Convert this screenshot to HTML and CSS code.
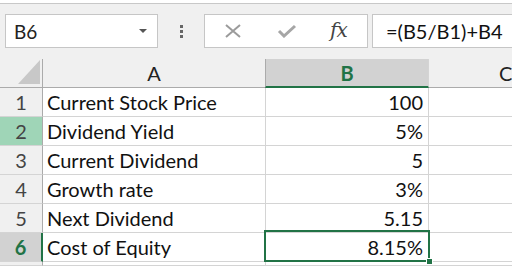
FILE: index.html
```html
<!DOCTYPE html>
<html lang="en">
<head>
    <meta charset="UTF-8">
    <meta name="viewport" content="width=device-width, initial-scale=1.0">
    <title>Cost of Equity</title>
    <link rel="stylesheet" href="styles.css">
</head>
<body>
<div class="topstrip"></div>
<div class="toolbar">
  <div class="namebox">
    <span>B6</span>
    <span class="arrow"></span>
  </div>
  <div class="dots"><i></i><i></i><i></i></div>
  <div class="fxbox">
    <svg class="icon" width="18" height="14" viewBox="0 0 18 14">
      <path d="M2 1 L16 13 M16 1 L2 13" stroke="#9b9b9b" stroke-width="2" fill="none"/>
    </svg>
    <svg class="icon" width="20" height="14" viewBox="0 0 20 14">
      <path d="M2 7 L7 12 L18 2" stroke="#a6a6a6" stroke-width="3" fill="none"/>
    </svg>
    <span class="fx">fx</span>
  </div>
  <div class="formula">=(B5/B1)+B4</div>
</div>

<div class="sheet">
  <div class="corner"><span class="tri"></span></div>
  <div class="colhead">A</div>
  <div class="colhead active">B</div>
  <div class="colhead last">C</div>

  <div class="rowhead">1</div>
  <div class="cell">Current Stock Price</div>
  <div class="cell num">100</div>
  <div class="cell"></div>

  <div class="rowhead green">2</div>
  <div class="cell">Dividend Yield</div>
  <div class="cell num">5%</div>
  <div class="cell"></div>

  <div class="rowhead">3</div>
  <div class="cell">Current Dividend</div>
  <div class="cell num">5</div>
  <div class="cell"></div>

  <div class="rowhead">4</div>
  <div class="cell">Growth rate</div>
  <div class="cell num">3%</div>
  <div class="cell"></div>

  <div class="rowhead">5</div>
  <div class="cell">Next Dividend</div>
  <div class="cell num">5.15</div>
  <div class="cell"></div>

  <div class="rowhead active">6</div>
  <div class="cell">Cost of Equity</div>
  <div class="cell num selected">8.15%</div>
  <div class="cell"></div>

  <div class="rowhead"></div>
  <div class="cell"></div>
  <div class="cell"></div>
  <div class="cell"></div>
</div>
</body>
</html>
```

FILE: styles.css
```css
body{
  margin:0;
  height:266px;
  background:#f0f0f0;
  font-family:Lato, "Open Sans", sans-serif;
  color:#111;
  overflow:hidden;
}
.topstrip{
  height:3px;
  background:#fff;
  border-bottom:1px solid #c8c8c8;
}
.toolbar{
  display:flex;
  align-items:center;
  height:34px;
  padding:10px 0 0 5px;
  white-space:nowrap;
}
.namebox{
  box-sizing:border-box;
  width:153px;
  height:34px;
  background:#fff;
  border:1px solid #c6c6c6;
  display:flex;
  align-items:center;
  justify-content:space-between;
  padding:0 10px 0 8px;
  font-size:19px;
  color:#222;
}
.arrow{
  width:0;
  height:0;
  border-left:4px solid transparent;
  border-right:4px solid transparent;
  border-top:4px solid #555;
}
.dots{
  display:flex;
  flex-direction:column;
  gap:2px;
  margin:0 21px 0 22px;
}
.dots i{
  display:block;
  width:3px;
  height:3px;
  background:#666;
}
.fxbox{
  box-sizing:border-box;
  width:164px;
  height:34px;
  background:#fff;
  border:1px solid #c6c6c6;
  display:flex;
  align-items:center;
  padding:0 0 0 19px;
}
.fxbox .icon:nth-child(2){
  margin-left:35px;
}
.fx{
  margin-left:33px;
  margin-top:-2px;
  font-family:"DejaVu Serif", serif;
  font-style:italic;
  font-size:20px;
  letter-spacing:-1px;
  color:#444;
}
.formula{
  box-sizing:border-box;
  flex:1;
  height:34px;
  margin-left:4px;
  background:#fff;
  border:1px solid #c6c6c6;
  border-right:none;
  padding:0 0 0 13px;
  display:flex;
  align-items:center;
  font-size:20px;
  color:#111;
}
.sheet{
  margin-top:11px;
  display:grid;
  grid-template-columns:43px 223px 163px 1fr;
  grid-template-rows:repeat(7,29px) 4px;
  font-size:20px;
}
.sheet > div{
  box-sizing:border-box;
  border-right:1px solid #d4d4d4;
  border-bottom:1px solid #d4d4d4;
  display:flex;
  align-items:center;
}
.corner{
  position:relative;
  border-right-color:#ababab !important;
  border-bottom-color:#ababab !important;
}
.tri{
  position:absolute;
  left:18px;
  top:1px;
  width:0;
  height:0;
  border-left:22px solid transparent;
  border-bottom:24px solid #c8c8c8;
}
.colhead{
  justify-content:center;
  color:#222;
  border-bottom-color:#ababab !important;
}
.colhead.active{
  background:#d2d2d2;
  color:#217346;
  font-weight:bold;
  border-left:1px solid #ababab;
  border-bottom:2px solid #217346 !important;
  margin-left:-1px;
}
.colhead.last{
  justify-content:flex-start;
  padding-left:70px;
}
.rowhead{
  justify-content:center;
  color:#444;
  border-right-color:#ababab !important;
}
.rowhead.green{
  background:#9fd5b7;
}
.rowhead.active{
  background:#d2d2d2;
  color:#217346;
  font-weight:bold;
  border-right:2px solid #217346 !important;
}
.cell{
  background:#fff;
  padding-left:4px;
}
.cell.num{
  justify-content:flex-end;
  padding:0 5px 0 0;
}
.selected{
  position:relative;
}
.selected::after{
  content:"";
  position:absolute;
  left:-2px;
  right:-2px;
  top:-3px;
  bottom:-1px;
  border:2px solid #217346;
}
.selected::before{
  content:"";
  position:absolute;
  right:-5px;
  bottom:-4px;
  width:5px;
  height:5px;
  background:#217346;
  border:1px solid #fff;
  z-index:1;
}
```
